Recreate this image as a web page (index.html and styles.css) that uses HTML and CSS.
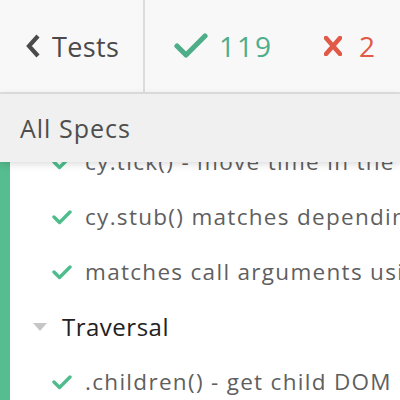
FILE: index.html
```html
<!DOCTYPE html>
<html>
<head>
<meta charset="utf-8">
<link rel="stylesheet" href="styles.css">
</head>
<body>
<div class="app">
  <header class="top">
    <div class="back">
      <svg class="chev" width="16" height="24" viewBox="0 0 16 24"><polyline points="13,2 4,12 13,22" fill="none" stroke="#4a4a4a" stroke-width="4.2" stroke-linecap="butt" stroke-linejoin="miter"/></svg>
      <span>Tests</span>
    </div>
    <div class="stats">
      <span class="stat pass">
        <svg width="34" height="26" viewBox="0 0 34 26"><polyline points="3,13 12,22 31,3" fill="none" stroke="currentColor" stroke-width="5.2" stroke-linecap="round" stroke-linejoin="round"/></svg>
        <span>119</span>
      </span>
      <span class="stat fail">
        <svg width="18" height="20" viewBox="0 0 18 20"><path d="M2,2 L16,18 M16,2 L2,18" fill="none" stroke="currentColor" stroke-width="4.5" stroke-linecap="round"/></svg>
        <span>2</span>
      </span>
    </div>
  </header>
  <div class="specs-bar">All Specs</div>
  <div class="runnables">
    <div class="test"><svg class="ok" width="20" height="16" viewBox="0 0 20 16"><polyline points="2,8 7.5,13.5 18,3" fill="none" stroke="currentColor" stroke-width="3.4" stroke-linecap="round" stroke-linejoin="round"/></svg><span>cy.tick() - move time in the browser</span></div>
    <div class="test"><svg class="ok" width="20" height="16" viewBox="0 0 20 16"><polyline points="2,8 7.5,13.5 18,3" fill="none" stroke="currentColor" stroke-width="3.4" stroke-linecap="round" stroke-linejoin="round"/></svg><span>cy.stub() matches depending on arguments</span></div>
    <div class="test"><svg class="ok" width="20" height="16" viewBox="0 0 20 16"><polyline points="2,8 7.5,13.5 18,3" fill="none" stroke="currentColor" stroke-width="3.4" stroke-linecap="round" stroke-linejoin="round"/></svg><span>matches call arguments using Sinon matchers</span></div>
    <div class="suite"><svg class="tri" width="16" height="10" viewBox="0 0 16 10"><polygon points="1,1 15,1 8,9" fill="#c6c6c6"/></svg><span>Traversal</span></div>
    <div class="test"><svg class="ok" width="20" height="16" viewBox="0 0 20 16"><polyline points="2,8 7.5,13.5 18,3" fill="none" stroke="currentColor" stroke-width="3.4" stroke-linecap="round" stroke-linejoin="round"/></svg><span>.children() - get child DOM elements</span></div>
  </div>
</div>
</body>
</html>
```
FILE: styles.css
```css
* { box-sizing: border-box; }
html, body { margin: 0; padding: 0; }
body {
  width: 400px;
  height: 400px;
  overflow: hidden;
  background: #fff;
  font-family: "Open Sans", "Lato", sans-serif;
}
.app { display: flex; flex-direction: column; height: 400px; overflow: hidden; }
.top {
  height: 94px;
  flex: none;
  display: flex;
  background: #f8f8f8;
  border-bottom: 2px solid #e1e1e1;
}
.back {
  width: 145px;
  flex: none;
  border-right: 2px solid #dcdcdc;
  display: flex;
  align-items: center;
  padding-left: 25px;
  gap: 11px;
  color: #4a4a4a;
  font-size: 27px;
  letter-spacing: 0.4px;
}
.stats {
  flex: 1;
  display: flex;
  align-items: center;
  padding-left: 29px;
  gap: 51px;
  font-size: 28px;
  letter-spacing: 2px;
}
.stat { display: flex; align-items: center; gap: 11px; }
.pass { color: #4fae8a; }
.fail { color: #e05a47; gap: 17px; }
.specs-bar {
  position: relative;
  z-index: 2;
  flex: none;
  height: 68px;
  background: #f0f0f0;
  box-shadow: 0 2px 8px rgba(0,0,0,0.15);
  padding-left: 20px;
  display: flex;
  align-items: center;
  font-size: 25px;
  letter-spacing: 1px;
  color: #4e4e4e;
}
.runnables {
  flex: 1;
  margin-top: -28px;
  border-left: 10px solid #55bd8f;
}
.test, .suite {
  height: 55px;
  display: flex;
  align-items: center;
  white-space: nowrap;
}
.test { padding-left: 42px; gap: 13px; font-size: 22.5px; letter-spacing: 1.3px; color: #5f5f5f; }
.ok { color: #4ebd8b; flex: none; }
.suite { padding-left: 22px; gap: 14px; font-size: 24px; letter-spacing: 0.5px; color: #222; }
.tri { flex: none; }
```
